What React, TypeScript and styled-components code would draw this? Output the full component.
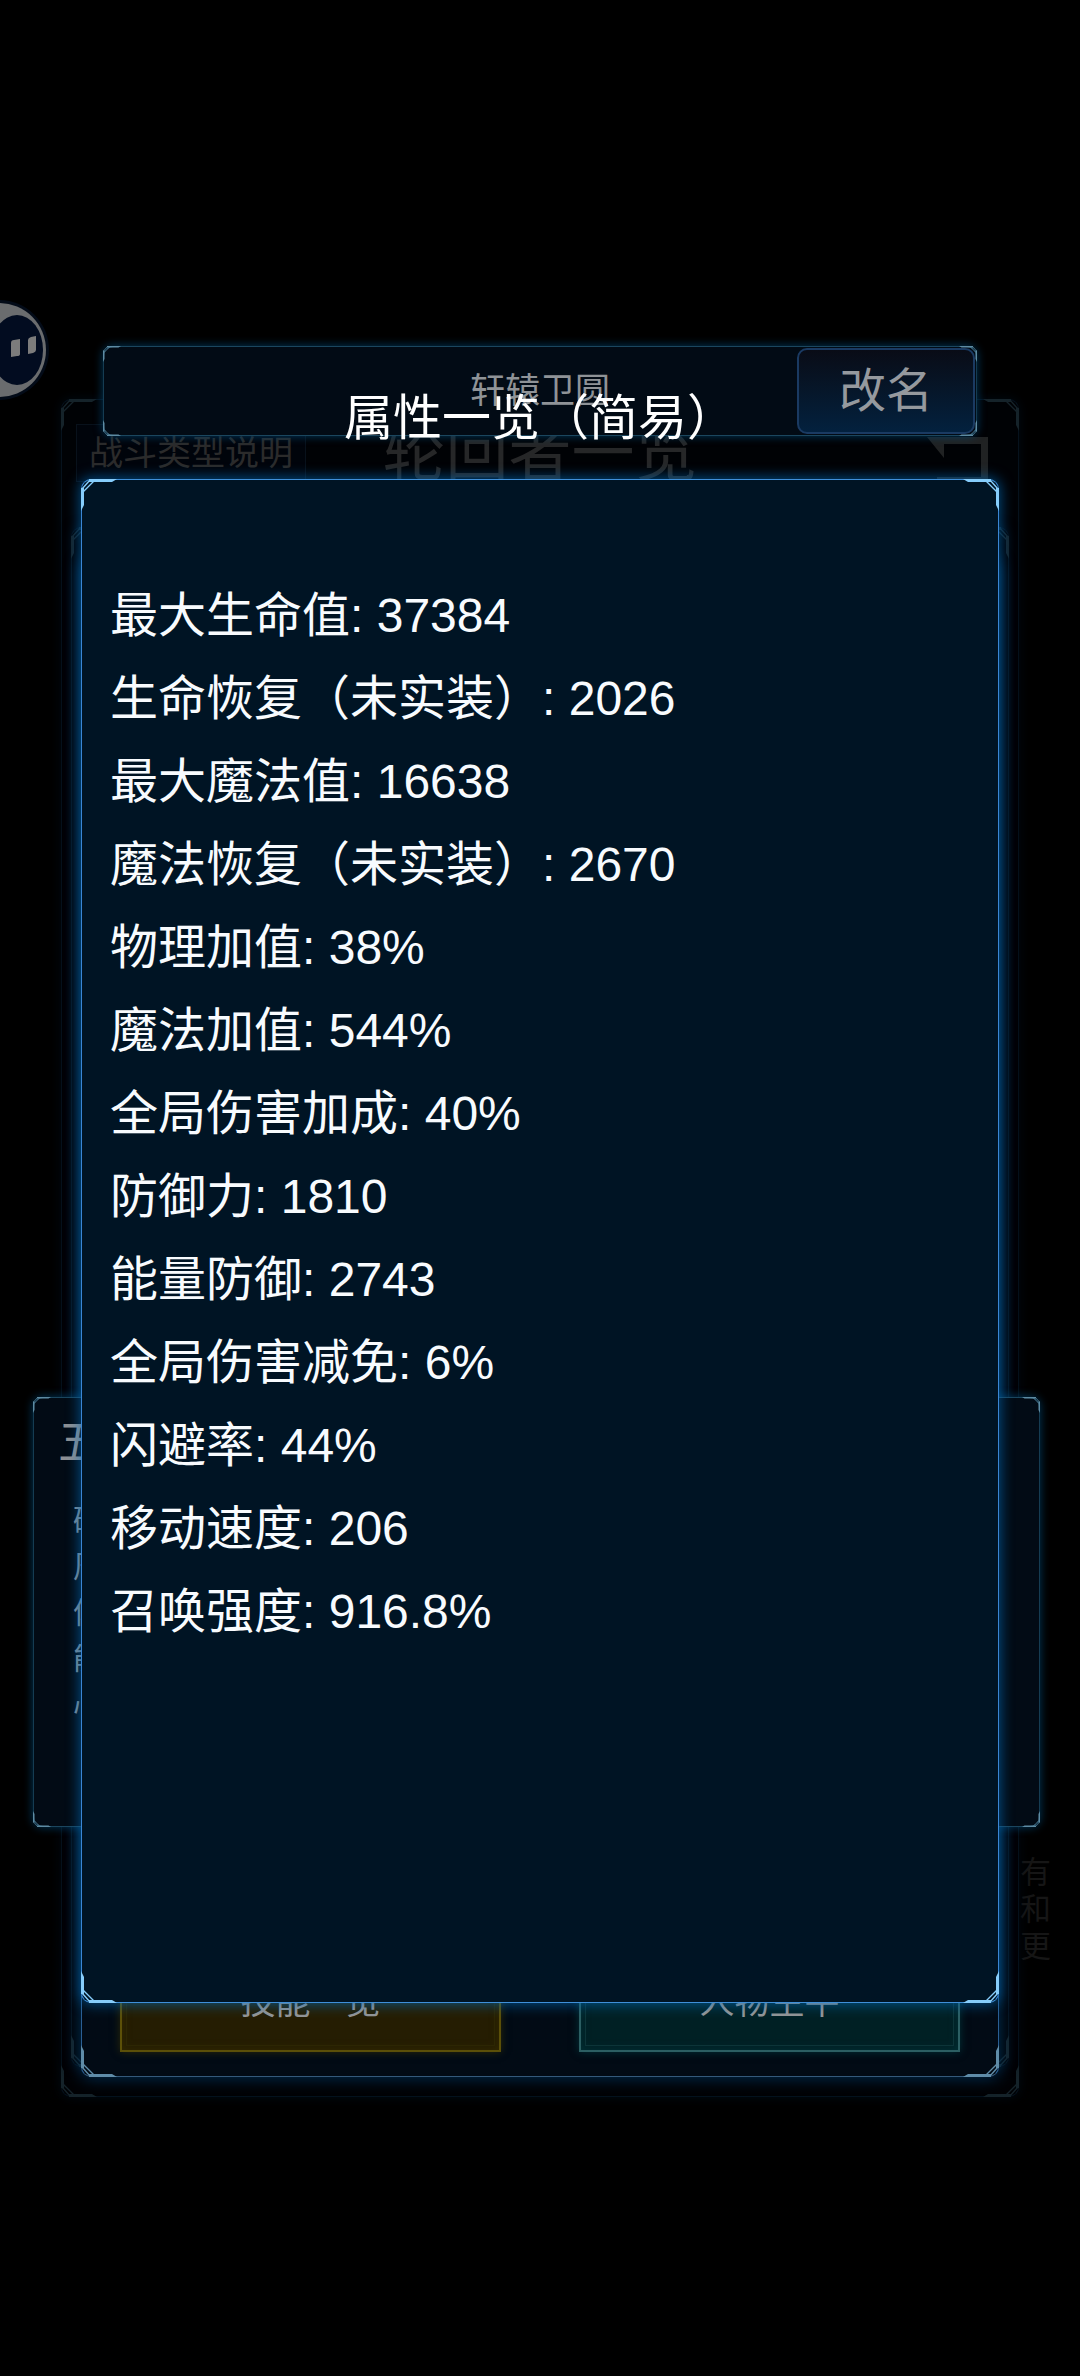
import React from "react";
import styled, { createGlobalStyle } from "styled-components";

const GlobalStyle = createGlobalStyle`
  *, *::before, *::after { box-sizing: border-box; }
  body { margin: 0; background: #000; }
  h1, h2, p, ul { margin: 0; padding: 0; font-weight: 400; }
  ul { list-style: none; }
  button { margin: 0; padding: 0; font: inherit; cursor: pointer; }
`;

const Stage = styled.main`
  display: grid;
  grid-template-columns: minmax(0, 1fr);
  min-height: 100vh;
  overflow: hidden;
  background: #000;
  color: #fff;
  font-family: "Liberation Sans", "Noto Sans CJK SC", sans-serif;
`;

/* ---------- glowing frame ---------- */

type Tone = { line: string; side: string; corner: string; glow: string; fill: string };

const tones: Record<"bright" | "medium" | "soft" | "dim", Tone> = {
  bright: {
    line: "#3f8fd8",
    side: "#3a86d4",
    corner: "#86cdfb",
    glow: "0 0 14px 1px rgba(0, 110, 190, 0.7)",
    fill: "#001424",
  },
  medium: {
    line: "#34597a",
    side: "#2a5f94",
    corner: "#5f8ca8",
    glow: "0 0 16px 1px rgba(0, 80, 140, 0.6)",
    fill: "#020b15",
  },
  soft: {
    line: "#1b465e",
    side: "#153c52",
    corner: "#5d8ba3",
    glow: "0 0 9px 1px rgba(0, 80, 130, 0.6)",
    fill: "#020b15",
  },
  dim: {
    line: "#04121e",
    side: "#06121d",
    corner: "#15232a",
    glow: "0 0 12px rgba(0, 22, 40, 0.5)",
    fill: "#000205",
  },
};

const Frame = styled.section<{ $tone: keyof typeof tones }>`
  position: relative;
  border: 1px solid ${(p) => tones[p.$tone].side};
  border-top-color: ${(p) => tones[p.$tone].line};
  border-bottom-color: ${(p) => tones[p.$tone].line};
  border-radius: 10px;
  background: ${(p) => tones[p.$tone].fill};
  box-shadow: ${(p) => tones[p.$tone].glow};
`;

const CornerMark = styled.svg<{ $right?: boolean; $bottom?: boolean }>`
  position: absolute;
  ${(p) => (p.$right ? "right: -1px;" : "left: -1px;")}
  ${(p) => (p.$bottom ? "bottom: -1px;" : "top: -1px;")}
  transform: scale(${(p) => (p.$right ? -1 : 1)}, ${(p) => (p.$bottom ? -1 : 1)});
  overflow: visible;
  pointer-events: none;
`;

function Corners({ tone, small }: { tone: keyof typeof tones; small?: boolean }) {
  const color = tones[tone].corner;
  const spots = [
    { right: false, bottom: false },
    { right: true, bottom: false },
    { right: false, bottom: true },
    { right: true, bottom: true },
  ];
  return (
    <>
      {spots.map((s) => (
        <CornerMark
          key={`${s.right}-${s.bottom}`}
          $right={s.right}
          $bottom={s.bottom}
          width={small ? 18 : 36}
          height={small ? 16 : 32}
          viewBox="0 0 36 32"
          aria-hidden="true"
        >
          <path d="M8 0H36L31 3H8Z" fill={color} />
          <path d="M0 9H3V26L0 32Z" fill={color} />
          <path d="M1 10L9 1M2 13L13 2" stroke={color} strokeWidth="1.4" fill="none" />
        </CornerMark>
      ))}
    </>
  );
}

/* ---------- layers ---------- */

const SideNote = styled.p`
  grid-area: 1 / 1;
  justify-self: end;
  width: 60px;
  margin-top: 1854px;
  color: #161616;
  font-size: 31px;
  line-height: 37px;
`;

const ListFrame = styled(Frame)`
  grid-area: 1 / 1;
  margin: 399px 61px 279px;
`;

const InnerFrame = styled(Frame)`
  grid-area: 1 / 1;
  margin: 527px 71px 309px;
`;

const ListHeader = styled.header`
  display: grid;
  grid-template-columns: 1fr auto 1fr;
  align-items: center;
  padding: 24px 14px 0;
`;

const HelpButton = styled.button`
  justify-self: start;
  height: 58px;
  padding: 0 12px;
  border: 1px solid #08111b;
  background: #00040b;
  color: #2b2b2b;
  font-size: 34px;
  line-height: 56px;
`;

const ListTitle = styled.h1`
  color: #262728;
  font-size: 63px;
  line-height: 58px;
`;

const BackButton = styled.button`
  justify-self: end;
  height: 58px;
  margin-right: 16px;
  border: 0;
  background: none;
`;

const CharacterFrame = styled(Frame)`
  grid-area: 1 / 1;
  display: flex;
  align-items: flex-end;
  gap: 78px;
  margin: 560px 81px 299px;
  padding: 0 38px 24px;
`;

const ActionButton = styled.button<{ $gold?: boolean }>`
  flex: 1;
  height: 100px;
  border: 2px solid ${(p) => (p.$gold ? "#5c5008" : "#2c5f63")};
  outline: 1px solid ${(p) => (p.$gold ? "#2c2603" : "#0c3438")};
  outline-offset: -7px;
  background: ${(p) => (p.$gold ? "#251d02" : "#002024")};
  box-shadow: 0 0 8px ${(p) => (p.$gold ? "rgba(70, 60, 0, 0.6)" : "rgba(0, 75, 80, 0.6)")},
    inset 0 0 10px ${(p) => (p.$gold ? "rgba(60, 50, 0, 0.6)" : "rgba(0, 60, 66, 0.6)")};
  color: #959595;
  font-size: 35px;
  line-height: 96px;
`;

const TraitsFrame = styled(Frame)`
  grid-area: 1 / 1;
  margin: 1397px 40px 549px 33px;
  padding: 14px 24px;
`;

const TraitsTitle = styled.h2`
  color: #8d9094;
  font-size: 46px;
  line-height: 60px;
`;

const TraitsList = styled.ul`
  padding: 26px 15px;
  color: #7d8a94;
  font-size: 30px;
  line-height: 46px;
`;

const NameBar = styled(Frame)`
  grid-area: 1 / 1;
  align-self: start;
  display: grid;
  grid-template-columns: 1fr auto 1fr;
  align-items: center;
  margin: 346px 103px 0;
  padding: 1px;
`;

const PlayerName = styled.p`
  grid-column: 2;
  color: #8f9397;
  font-size: 35px;
  line-height: 48px;
`;

const RenameButton = styled.button`
  justify-self: end;
  width: 178px;
  height: 86px;
  border: 2px solid #1a3a62;
  border-radius: 10px;
  background: linear-gradient(#090c16, #03213e);
  color: #95999e;
  font-size: 47px;
  line-height: 82px;
`;

const Assistant = styled.button`
  grid-area: 1 / 1;
  justify-self: start;
  align-self: start;
  width: 52px;
  height: 104px;
  margin-top: 298px;
  border: 0;
  background: none;
  z-index: 1;
`;

const Icon = styled.svg`
  display: block;
`;

const Popup = styled.div`
  grid-area: 1 / 1;
  display: flex;
  flex-direction: column;
  gap: 29px;
  margin: 386px 81px 373px;
`;

const PopupTitle = styled.h2`
  position: relative;
  font-size: 49px;
  line-height: 64px;
  text-align: center;
`;

const PopupPanel = styled(Frame)`
  flex: 1;
  padding: 94px 28px;
`;

const Stat = styled.li`
  color: #f8fbfe;
  font-size: 48px;
  line-height: 83px;
`;

const stats: [string, string][] = [
  ["最大生命值", "37384"],
  ["生命恢复（未实装）", "2026"],
  ["最大魔法值", "16638"],
  ["魔法恢复（未实装）", "2670"],
  ["物理加值", "38%"],
  ["魔法加值", "544%"],
  ["全局伤害加成", "40%"],
  ["防御力", "1810"],
  ["能量防御", "2743"],
  ["全局伤害减免", "6%"],
  ["闪避率", "44%"],
  ["移动速度", "206"],
  ["召唤强度", "916.8%"],
];

const traits = ["破", "周", "体", "能", "心"];

export default function App() {
  return (
    <>
      <GlobalStyle />
      <Stage lang="zh-CN">
        <SideNote>
          有
          <br />
          和
          <br />
          更
        </SideNote>

        <ListFrame $tone="dim">
          <ListHeader>
            <HelpButton type="button">战斗类型说明</HelpButton>
            <ListTitle>轮回者一览</ListTitle>
            <BackButton type="button" aria-label="返回">
              <Icon width="61" height="58" viewBox="0 0 61 58" fill="#202223">
                <path d="M0 13H61V53H54V20H17V34Z" />
                <path d="M10 53H61V57H10Z" />
              </Icon>
            </BackButton>
          </ListHeader>
          <Corners tone="dim" />
        </ListFrame>

        <InnerFrame $tone="dim">
          <Corners tone="dim" />
        </InnerFrame>

        <CharacterFrame $tone="medium">
          <ActionButton type="button" $gold>
            技能一览
          </ActionButton>
          <ActionButton type="button">人物生平</ActionButton>
          <Corners tone="medium" />
        </CharacterFrame>

        <TraitsFrame $tone="soft">
          <TraitsTitle>五</TraitsTitle>
          <TraitsList>
            {traits.map((t) => (
              <li key={t}>{t}</li>
            ))}
          </TraitsList>
          <Corners tone="soft" small />
        </TraitsFrame>

        <NameBar $tone="soft">
          <PlayerName>轩辕卫圆</PlayerName>
          <RenameButton type="button">改名</RenameButton>
          <Corners tone="soft" small />
        </NameBar>

        <Assistant type="button" aria-label="助手">
          <Icon width="52" height="104" viewBox="0 0 52 104">
            <circle cx="-1" cy="52" r="50" fill="#030b18" />
            <circle cx="-1" cy="52" r="47" fill="#6a6c6e" />
            <ellipse cx="17" cy="52" rx="26" ry="35" fill="#020c20" />
            <path d="M11 45Q11 42 14 42L20 41V56Q20 58 17 58L11 59Z" fill="#7c7c7c" />
            <path d="M28 42Q28 40 31 39L36 38V52Q36 54 33 55L28 56Z" fill="#7c7c7c" />
          </Icon>
        </Assistant>

        <Popup role="dialog" aria-labelledby="popup-title">
          <PopupTitle id="popup-title">属性一览（简易）</PopupTitle>
          <PopupPanel $tone="bright">
            <ul>
              {stats.map(([label, value]) => (
                <Stat key={label}>
                  {label}: {value}
                </Stat>
              ))}
            </ul>
            <Corners tone="bright" />
          </PopupPanel>
        </Popup>
      </Stage>
    </>
  );
}
